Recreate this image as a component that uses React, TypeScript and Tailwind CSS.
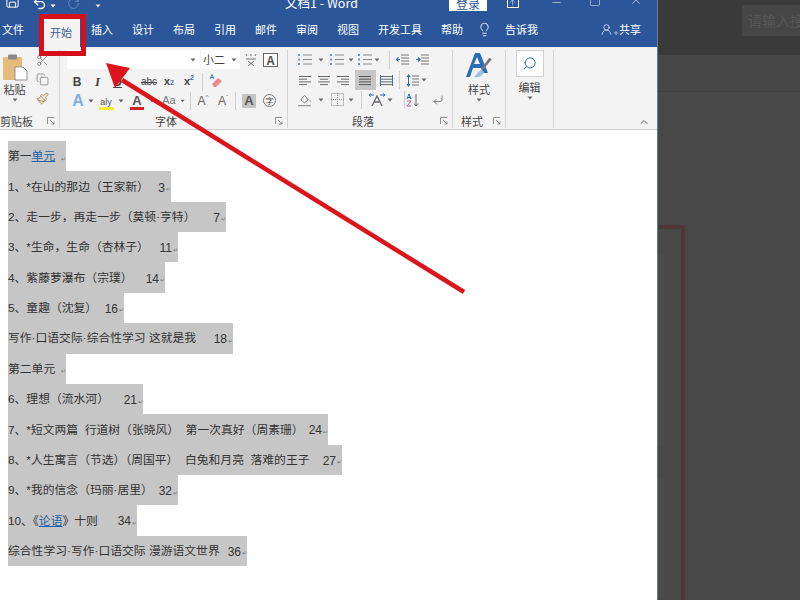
import React from "react";
import { Save, Undo2, RotateCw, Lightbulb, Scissors, Copy, Paintbrush, ChevronUp, Search, UserRound, Plus, X, Minus, Square, ArrowUp, CornerDownLeft } from "lucide-react";

const Caret = ({ w = "w-[8px]", color = "#666" }: { w?: string; color?: string }) => (
  <span className={`${w} flex justify-center`}>
    <svg width="6" height="4" viewBox="0 0 6 4"><path d="M0.5 0.5h5L3 3.5z" fill={color} /></svg>
  </span>
);

const Launcher = () => (
  <svg width="8" height="8" viewBox="0 0 8 8" fill="none" stroke="#777" strokeWidth="0.8">
    <path d="M0.5 7V0.5H7" />
    <path d="M3 3l4 4M7 4.5V7H4.5" />
  </svg>
);

const Sep = ({ h = "h-[18px]" }: { h?: string }) => <span className={`${h} w-px bg-[#d0d0d0]`} />;

const Lines = ({ kind }: { kind: "left" | "center" | "right" | "justify" | "dist" }) => {
  const rows: Record<string, [number, number][]> = {
    left: [[0, 12], [0, 8], [0, 12], [0, 8]],
    center: [[0, 12], [2, 10], [0, 12], [2, 10]],
    right: [[0, 12], [4, 12], [0, 12], [4, 12]],
    justify: [[0, 12], [0, 12], [0, 12], [0, 12]],
    dist: [[0, 12], [0, 12], [0, 12], [0, 12]],
  };
  return (
    <svg width="13" height="11" viewBox="0 0 13 11" stroke={kind === "justify" ? "#555" : "#6b6b6b"} strokeWidth="1">
      {rows[kind].map((r, i) => (
        <line key={i} x1={r[0]} x2={r[1]} y1={1.5 + i * 2.7} y2={1.5 + i * 2.7} />
      ))}
      {kind === "dist" && <path d="M0.5 0v11M12.5 0v11" stroke="#3f6fb0" />}
    </svg>
  );
};

const ListIcon = () => (
  <svg width="14" height="13" viewBox="0 0 14 13">
    {[2, 6.5, 11].map((y, i) => (
      <g key={i}>
        <rect x="0" y={y - 1} width="2" height="2" fill="#6f93bf" />
        <line x1="5" x2="14" y1={y} y2={y} stroke="#888" />
      </g>
    ))}
  </svg>
);

const IndentIcon = ({ flip = false }: { flip?: boolean }) => (
  <svg width="13" height="11" viewBox="0 0 13 11">
    {[1, 4, 7, 10].map((y) => (
      <line key={y} x1="5" x2="13" y1={y} y2={y} stroke="#777" />
    ))}
    <path d={flip ? "M0 5.5h3.5M2 3.5l2 2-2 2" : "M4 5.5H0.5M2.5 3.5l-2 2 2 2"} stroke="#2b6cb8" fill="none" strokeWidth="1.2" />
  </svg>
);

const G = ({ className, label, labelClass, launcher = true, children }: { className: string; label: string; labelClass: string; launcher?: boolean; children: React.ReactNode }) => (
  <div className={`${className} mb-[1px] mt-[3px] flex flex-col border-r border-[#d4d4d4]`}>
    <div className="h-[64px]">{children}</div>
    <div className="mt-auto flex h-[14px] items-center text-[11px] leading-[14px] text-[#444]">
      <span className={labelClass}>{label}</span>
      {launcher && <span className="ml-auto mr-[4px] flex"><Launcher /></span>}
    </div>
  </div>
);

const S = ({ className, children }: { className: string; children?: React.ReactNode }) => (
  <span className={`${className} flex shrink-0 items-center justify-center`}>{children}</span>
);

const rowsData: { t: React.ReactNode; n: string; w: string }[] = [
  { t: <>第一<span className="text-[#1d5fa8] underline">单元</span></>, n: "", w: "w-[58px]" },
  { t: "1、*在山的那边（王家新）", n: "3", w: "w-[163px]" },
  { t: "2、走一步，再走一步（莫顿·亨特）", n: "7", w: "w-[218px]" },
  { t: "3、*生命，生命（杏林子）", n: "11", w: "w-[170px]" },
  { t: "4、紫藤萝瀑布（宗璞）", n: "14", w: "w-[157px]" },
  { t: "5、童趣（沈复）", n: "16", w: "w-[116px]" },
  { t: "写作·口语交际·综合性学习 这就是我", n: "18", w: "w-[225px]" },
  { t: "第二单元", n: "", w: "w-[58px]" },
  { t: "6、理想（流水河）", n: "21", w: "w-[135px]" },
  { t: "7、*短文两篇  行道树（张晓风）  第一次真好（周素珊）", n: "24", w: "w-[320px]" },
  { t: "8、*人生寓言（节选）（周国平）  白兔和月亮  落难的王子", n: "27", w: "w-[334px]" },
  { t: "9、*我的信念（玛丽·居里）", n: "32", w: "w-[170px]" },
  { t: <>10、《<span className="text-[#1d5fa8] underline">论语</span>》十则</>, n: "34", w: "w-[129px]" },
  { t: "综合性学习·写作·口语交际 漫游语文世界", n: "36", w: "w-[239px]" },
];

const tabs = ["插入", "设计", "布局", "引用", "邮件", "审阅", "视图", "开发工具", "帮助"];

export default function App() {
  return (
    <div className="relative flex h-[600px] w-[800px] overflow-hidden bg-[#484848] font-['Noto_Sans_CJK_SC','Liberation_Sans',sans-serif]">
      {/* Word window */}
      <div className="flex h-full w-[658px] shrink-0 flex-col border-r border-[#5f7c99] bg-white">
        {/* Title bar */}
        <div className="flex h-[11px] shrink-0 items-end overflow-hidden bg-[#2b579a] text-white">
          <span className="mb-[2px] ml-[5px] flex"><Save size={15} strokeWidth={1.6} /></span>
          <span className="ml-[12px] flex"><Undo2 size={15} strokeWidth={2.2} /></span>
          <span className="mb-[3px] ml-[2px] flex"><Caret color="#fff" /></span>
          <span className="mb-[1px] ml-[10px] flex text-[#6f8fc0]"><RotateCw size={13} strokeWidth={1.6} /></span>
          <span className="mb-[3px] ml-[14px] flex"><Caret color="#ddd" /></span>
          <span className="ml-[183px] whitespace-nowrap text-[12.5px] leading-[16px]">文档1 - Word</span>
          <span className="ml-[91px] flex h-[11px] w-[38px] items-end justify-center bg-white text-[12px] leading-[14px] text-[#2b579a]">登录</span>
          <span className="relative mb-[3px] ml-[20px] flex h-[12px] w-[12px] items-center justify-center border border-white"><ArrowUp size={9} strokeWidth={1.4} /></span>
          <span className="mb-[2px] ml-[31px] flex"><Minus size={13} strokeWidth={1} /></span>
          <span className="mb-[4px] ml-[26px] flex"><Square size={12} strokeWidth={1} /></span>
          <span className="mb-[4px] ml-[28px] flex"><X size={14} strokeWidth={1} /></span>
        </div>
        {/* Tabs */}
        <div className="flex h-[36px] shrink-0 items-center bg-[#2b579a] pl-[2px] text-[11px] text-white">
          <span className="w-[22px]">文件</span>
          <span className="ml-[18px] flex h-[29px] w-[38px] items-center justify-center self-end bg-[#f3f3f3] text-[#40608f]">开始</span>
          <div className="ml-[11px] flex gap-[19px]">
            {tabs.map((t) => (
              <span key={t} className="whitespace-nowrap">{t}</span>
            ))}
          </div>
          <span className="ml-[14px] flex"><Lightbulb size={15} strokeWidth={1.3} /></span>
          <span className="ml-[13px]">告诉我</span>
          <span className="ml-[62px] flex"><UserRound size={13} strokeWidth={1.2} /></span>
          <Plus size={6} className="mt-[8px]" />
          <span>共享</span>
        </div>
        {/* Ribbon */}
        <div className="flex h-[83px] shrink-0 border-b border-[#cfcfcf] bg-[#f3f3f3] text-[#444]">
          {/* Clipboard */}
          <G className="w-[60px]" label="剪贴板" labelClass="">
            <div className="flex h-full">
              <div className="flex w-[29px] flex-col items-center pt-[4px]">
                <svg width="26" height="27" viewBox="0 0 26 27">
                  <rect x="1" y="3" width="19" height="23" rx="1" fill="#e4bb7a" />
                  <rect x="6" y="0.5" width="9" height="5" rx="1" fill="#8a8a8a" />
                  <path d="M13 13h8l4 4v9H13z" fill="#fff" stroke="#8f8f8f" />
                </svg>
                <span className="mt-px text-[11px] leading-[14px]">粘贴</span>
                <span className="mt-[2px] flex"><Caret /></span>
              </div>
              <div className="ml-[4px] flex w-[18px] flex-col items-center gap-[6px] pt-[4px]">
                <Scissors size={13} className="text-[#666]" strokeWidth={1.3} />
                <Copy size={13} className="text-[#666]" strokeWidth={1.2} />
                <Paintbrush size={13} className="text-[#b98a3e]" strokeWidth={1.8} />
              </div>
            </div>
          </G>
          {/* Font */}
          <G className="w-[228px]" label="字体" labelClass="ml-[95px]">
            <div className="pl-[7px]">
              <div className="flex h-[19px] items-center">
                <div className="flex h-[19px] w-[133px] items-center justify-end bg-white pr-[3px]"><Caret /></div>
                <div className="ml-px flex h-[19px] w-[39px] items-center bg-white pl-[2px] text-[11px]">小二<span className="ml-[5px] flex"><Caret /></span></div>
                <S className="ml-[2px] w-[18px]">
                  <svg width="12" height="14" viewBox="0 0 12 14" fill="none" stroke="#666" strokeWidth="0.9">
                    <path d="M1 1l1 2M6 1v2M11 1l-1 2M1 6h10M3 8l6 5M9 8l-6 5" />
                  </svg>
                </S>
                <span className="ml-[3px] flex h-[14px] w-[15px] items-center justify-center border border-[#666] bg-white text-[12px] font-bold leading-none text-[#555]">A</span>
              </div>
              <div className="mt-[3px] flex h-[19px] items-center text-[11px] text-[#444]">
                <S className="w-[20px] font-['Liberation_Sans'] text-[12px] font-bold">B</S>
                <S className="w-[21px] font-['Liberation_Serif'] text-[13px] font-bold italic">I</S>
                <S className="w-[19px] font-['Liberation_Sans'] text-[12px] font-bold underline">U</S>
                <S className="ml-[12px] w-[20px] font-['Liberation_Sans'] text-[10px] line-through">abc</S>
                <S className="w-[20px] font-['Liberation_Sans'] text-[11px] font-bold">x<sub className="text-[7px] text-[#3f6fb0]">2</sub></S>
                <S className="w-[20px] font-['Liberation_Sans'] text-[11px] font-bold">x<sup className="text-[7px] text-[#3f6fb0]">2</sup></S>
                <span className="ml-[3px] flex"><Sep /></span>
                <S className="ml-[3px] w-[20px]">
                  <svg width="14" height="15" viewBox="0 0 14 15">
                    <path d="M1 5L3 0.5L5 5M2 3.500h2" stroke="#3f6fb0" strokeWidth="0.9" fill="none" />
                    <path d="M3 10l6-6 4 3-6 6H5z" fill="#e88a90" />
                  </svg>
                </S>
              </div>
              <div className="flex h-[19px] items-center font-['Liberation_Sans']">
                <S className="ml-px w-[20px] text-[16px] font-bold leading-none text-[#7fb0e0]">A</S>
                <Caret w="w-[6px]" />
                <span className="ml-[3px] flex h-[18px] w-[18px] flex-col items-center justify-end">
                  <span className="text-[9px] leading-[10px] text-[#555]">aly</span>
                  <span className="h-[3px] w-[15px] bg-[#f5ee3a]" />
                </span>
                <Caret w="w-[12px]" />
                <span className="flex h-[18px] w-[20px] flex-col items-center justify-end">
                  <span className="text-[13px] font-bold leading-[13px] text-[#555]">A</span>
                  <span className="h-[3px] w-[14px] bg-[#d0222a]" />
                </span>
                <Caret w="w-[10px]" />
                <S className="ml-px w-[22px] text-[11px] text-[#777]">Aa</S>
                <Caret w="w-[5px]" />
                <span className="ml-[5px] flex"><Sep /></span>
                <S className="ml-[4px] w-[16px] text-[12px] text-[#666]">A<span className="mb-[6px] text-[6px] text-[#3f6fb0]">^</span></S>
                <S className="w-[24px] text-[12px] text-[#666]">A<span className="mb-[6px] text-[6px] text-[#3f6fb0]">ˇ</span></S>
                <Sep />
                <S className="w-[26px]"><span className="flex h-[14px] w-[14px] items-center justify-center bg-[#c4c4c4] text-[13px] font-bold text-[#555]">A</span></S>
                <S className="w-[15px]"><span className="flex h-[13px] w-[13px] items-center justify-center rounded-full border border-[#777] font-['Noto_Sans_CJK_SC'] text-[8px] leading-none">字</span></S>
              </div>
            </div>
          </G>
          {/* Paragraph */}
          <G className="w-[165px]" label="段落" labelClass="ml-[64px]">
            <div className="pl-[10px]">
              <div className="flex h-[19px] items-center">
                <S className="w-[14px]"><ListIcon /></S>
                <Caret w="w-[18px]" />
                <S className="w-[14px]"><ListIcon /></S>
                <Caret w="w-[14px]" />
                <S className="w-[14px]"><ListIcon /></S>
                <Caret w="w-[10px]" />
                <span className="ml-[7px] flex"><Sep /></span>
                <S className="ml-[6px] w-[13px]"><IndentIcon /></S>
                <S className="ml-[7px] w-[13px]"><IndentIcon flip /></S>
              </div>
              <div className="mt-px flex h-[20px] items-center">
                <S className="w-[14px]"><Lines kind="left" /></S>
                <S className="ml-[5px] w-[14px]"><Lines kind="center" /></S>
                <S className="ml-[5px] w-[14px]"><Lines kind="right" /></S>
                <S className="ml-[5px] h-[20px] w-[21px] bg-[#c6c6c6]"><Lines kind="justify" /></S>
                <S className="ml-[3px] w-[14px]"><Lines kind="dist" /></S>
                <span className="ml-[6px] flex"><Sep /></span>
                <S className="ml-[5px] w-[14px]">
                  <svg width="13" height="13" viewBox="0 0 13 13">
                    <path d="M2.5 0l2 3h-4zM2.5 13l2-3h-4z" fill="#2b6cb8" />
                    <path d="M2.5 3v7" stroke="#2b6cb8" />
                    <path d="M6 2h7M6 5h7M6 8h7M6 11h7" stroke="#777" />
                  </svg>
                </S>
                <Caret w="w-[10px]" />
              </div>
              <div className="flex h-[19px] items-center">
                <S className="w-[14px]">
                  <svg width="15" height="14" viewBox="0 0 15 14" fill="none" stroke="#777">
                    <path d="M3 7l4-5 4 5-4 3z" />
                    <path d="M0 13h14" stroke="#999" strokeWidth="1.4" />
                    <circle cx="13" cy="8" r="1" fill="#9ab" stroke="none" />
                  </svg>
                </S>
                <Caret w="w-[18px]" />
                <S className="w-[14px]">
                  <svg width="13" height="13" viewBox="0 0 13 13" fill="none" stroke="#888" strokeDasharray="1 1">
                    <rect x="0.5" y="0.5" width="12" height="12" />
                    <path d="M6.5 0v13M0 6.5h13" />
                  </svg>
                </S>
                <Caret w="w-[14px]" />
                <span className="ml-[3px] flex"><Sep /></span>
                <S className="ml-[6px] w-[18px]">
                  <svg width="18" height="14" viewBox="0 0 18 14" fill="none">
                    <path d="M1 2h5M12 2h5M1 2l2-1.5M1 2l2 1.5M17 2l-2-1.500M17 2l-2 1.500" stroke="#2b6cb8" />
                    <path d="M4 13l5-10 5 10M6 9h6" stroke="#666" strokeWidth="1.3" />
                  </svg>
                </S>
                <Caret w="w-[8px]" />
                <span className="ml-[10px] flex"><Sep /></span>
                <S className="w-[14px]">
                  <svg width="13" height="14" viewBox="0 0 13 14" fill="none">
                    <path d="M1 6l2-5 2 5M1.500 4.500h3" stroke="#2b6cb8" />
                    <path d="M1 8h4L1 13h4" stroke="#b060b0" />
                    <path d="M10 1v12M8 10.500l2 2.500 2-2.500" stroke="#666" />
                  </svg>
                </S>
                <S className="ml-[12px] w-[14px] text-[#666]"><CornerDownLeft size={12} strokeWidth={1.6} /></S>
              </div>
            </div>
          </G>
          {/* Styles */}
          <G className="w-[53px]" label="样式" labelClass="ml-[8px]">
            <div className="flex flex-col items-center pt-[2px]">
              <svg width="28" height="29" viewBox="0 0 28 29">
                <path d="M1 25L10 1h5l8 20h-5l-2-5H8l-3 9zM9 12h6l-3-7z" fill="#2b6cb8" fillRule="evenodd" />
                <path d="M27 7L18 18l-2-1 8-11z" fill="#777" />
                <path d="M17 18c-3 0-4 3-8 7 4 1 9-1 10-5z" fill="#9bc0e6" />
              </svg>
              <span className="mt-px text-[11px] leading-[14px]">样式</span>
              <span className="mt-[2px] flex"><Caret /></span>
            </div>
          </G>
          {/* Edit */}
          <G className="w-[48px]" label="" labelClass="" launcher={false}>
            <div className="flex flex-col items-center">
              <span className="flex h-[27px] w-[28px] items-center justify-center border border-[#d0d0d0] bg-white text-[#2b6cb8]"><Search size={15} strokeWidth={1.6} className="-scale-x-100" /></span>
              <span className="mt-[3px] text-[11px] leading-[14px]">编辑</span>
              <span className="mt-[2px] flex"><Caret /></span>
            </div>
          </G>
          <div className="flex flex-1 items-end justify-end pb-[1px] pr-[7px]">
            <ChevronUp size={12} className="text-[#666]" />
          </div>
        </div>
        {/* Document */}
        <div className="flex-1 bg-white pl-[8px] pt-[11px]">
          <div className="flex flex-col font-['Liberation_Sans','Noto_Sans_CJK_SC',sans-serif] text-[11.8px] text-[#333]">
            {rowsData.map((r, i) => (
              <div key={i} className={`${r.w} flex h-[30.36px] items-center justify-between whitespace-pre bg-[#c6c6c6] pt-[2px] leading-none`}>
                <span>{r.t}</span>
                <span className="flex items-center text-[12px]">
                  {r.n}
                  <span className="ml-px mt-[3px] w-[5px] text-[6px] text-[#777]">↵</span>
                </span>
              </div>
            ))}
          </div>
        </div>
      </div>
      {/* Dimmed page behind */}
      <div className="flex h-full flex-1 flex-col">
        <div className="flex h-[55px] shrink-0 items-start bg-[#3a3a3a] pl-[84px] pt-[5px]">
          <div className="flex h-[31px] flex-1 items-center overflow-hidden whitespace-nowrap bg-[#464646] pl-[6px] text-[14px] text-[#585858]">请输入搜索内容</div>
        </div>
        <div className="h-[37px] shrink-0 border-b border-[#424242] bg-[#474747]" />
        <div className="flex-1 pt-[133px]">
          <div className="h-[400px] w-[27px] border-r-4 border-t-4 border-[#503838] pt-[25px]">
            <div className="h-[193px] w-[6px] bg-[#4b4b4b]" />
            <div className="mt-[32px] h-[120px] w-[6px] bg-[#4b4b4b]" />
          </div>
        </div>
      </div>
      {/* Overlays: red annotation */}
      <span className="absolute left-[39px] top-[14px] h-[42px] w-[47px] border-[5px] border-[#d5101a]" />
      <svg className="absolute left-0 top-0" width="800" height="600" viewBox="0 0 800 600">
        <line x1="122" y1="80" x2="464" y2="292" stroke="#dc141c" strokeWidth="4.5" />
        <path d="M106 63L130 68L115 88z" fill="#dc141c" />
      </svg>
    </div>
  );
}
